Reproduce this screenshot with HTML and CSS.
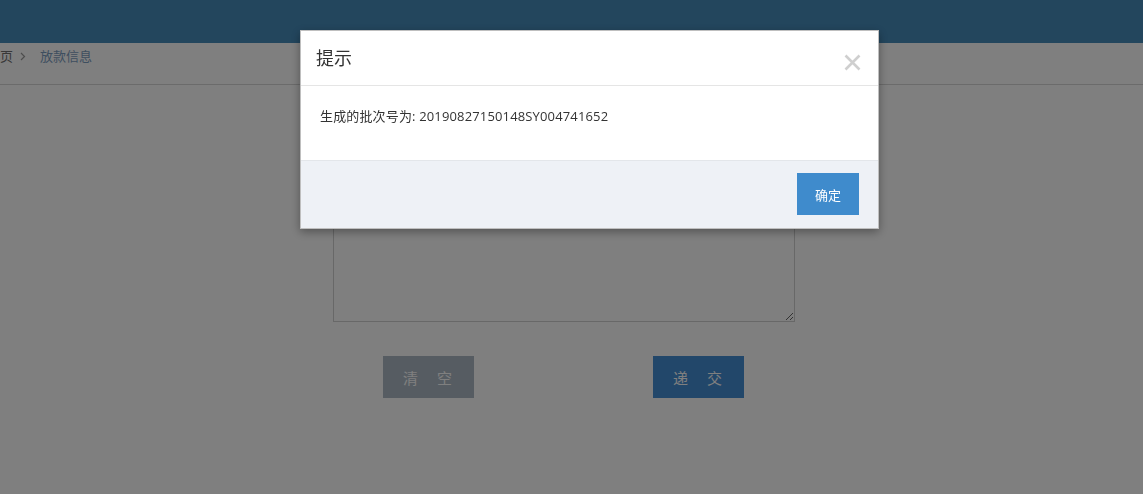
FILE: index.html
```html
<!DOCTYPE html>
<html lang="zh-CN">
<head>
<meta charset="utf-8">
<title>放款信息</title>
<link rel="stylesheet" href="styles.css">
</head>
<body>
<header class="topbar"></header>
<nav class="crumbs">
  <span class="crumb home">首页</span>
  <svg class="chev" width="6" height="9" viewBox="0 0 6 9"><path d="M1 1 L4.5 4.5 L1 8" fill="none" stroke="#9a9a9a" stroke-width="1.2"/></svg>
  <span class="crumb cur">放款信息</span>
</nav>
<main class="content">
  <form class="form">
    <textarea class="memo"></textarea>
    <div class="actions">
      <button type="button" class="btn btn-clear">清　空</button>
      <button type="button" class="btn btn-submit">递　交</button>
    </div>
  </form>
</main>

<div class="backdrop">
  <div class="modal">
    <div class="modal-header">
      <h4 class="modal-title">提示</h4>
      <button type="button" class="close" aria-label="关闭">
        <svg width="17" height="17" viewBox="0 0 17 17"><path d="M1.5 1.5 L15.5 15.5 M15.5 1.5 L1.5 15.5" stroke="#cfcfcf" stroke-width="2.6" fill="none"/></svg>
      </button>
    </div>
    <div class="modal-body">生成的批次号为: 20190827150148SY004741652</div>
    <div class="modal-footer">
      <button type="button" class="btn-ok">确定</button>
    </div>
  </div>
</div>
</body>
</html>
```

FILE: styles.css
```css
* { box-sizing: border-box; }
html, body { margin: 0; padding: 0; }
body {
  background: #fff;
  font-family: "Open Sans", "Noto Sans CJK SC", sans-serif;
  font-size: 13px;
  color: #333;
  height: 494px;
  overflow: hidden;
}
.topbar {
  height: 43px;
  background: #468cbb;
}
.crumbs {
  height: 42px;
  border-bottom: 1px solid #d6d6d6;
  display: flex;
  align-items: flex-start;
  padding-top: 4px;
  margin-left: -13px;
}
.crumb { font-size: 13px; line-height: 18px; }
.home { color: #707070; }
.chev { margin: 5px 0 0 7px; }
.cur { color: #7d9dbf; margin-left: 14px; }

.form {
  margin-left: 333px;
  width: 462px;
  display: flex;
  flex-direction: column;
}
.memo {
  display: block;
  width: 462px;
  height: 237px;
  margin: 0;
  border: 1px solid #d0d0d0;
  background: #fff;
  resize: both;
}
.actions {
  display: flex;
  gap: 179px;
  padding-left: 50px;
  margin-top: 34px;
}
.btn {
  width: 91px;
  height: 42px;
  border: 0;
  color: #fff;
  font-family: "Open Sans", "Noto Sans CJK SC", sans-serif;
  font-size: 15px;
  letter-spacing: 2px;
  padding: 0;
}
.btn-clear { background: #acb8c4; }
.btn-submit { background: #448ed4; }

.backdrop {
  position: fixed;
  inset: 0;
  background: rgba(0, 0, 0, 0.5);
}
.modal {
  margin: 30px 0 0 300px;
  width: 579px;
  background: #fff;
  border: 1px solid rgba(0, 0, 0, 0.25);
  box-shadow: 0 3px 9px rgba(0, 0, 0, 0.35);
}
.modal-header {
  height: 55px;
  border-bottom: 1px solid #e5e5e5;
  display: flex;
  align-items: flex-start;
  justify-content: space-between;
  padding: 14px 17px 0 15px;
}
.modal-title {
  margin: 0;
  font-size: 18px;
  font-weight: normal;
  line-height: 26px;
  color: #333;
}
.close {
  border: 0;
  background: none;
  padding: 0;
  margin-top: 9px;
  width: 17px;
  height: 17px;
  display: flex;
}
.modal-body {
  padding: 20px 19px 34px;
  line-height: 20px;
  font-size: 13px;
  letter-spacing: 0.15px;
  color: #333;
}
.modal-footer {
  border-top: 1px solid #e3e6ea;
  background: #eef1f6;
  display: flex;
  justify-content: flex-end;
  padding: 12px 19px 13px;
}
.btn-ok {
  width: 62px;
  height: 42px;
  border: 0;
  background: #3f8bcc;
  color: #fff;
  font-family: "Open Sans", "Noto Sans CJK SC", sans-serif;
  font-size: 13px;
  padding: 0;
}
```
